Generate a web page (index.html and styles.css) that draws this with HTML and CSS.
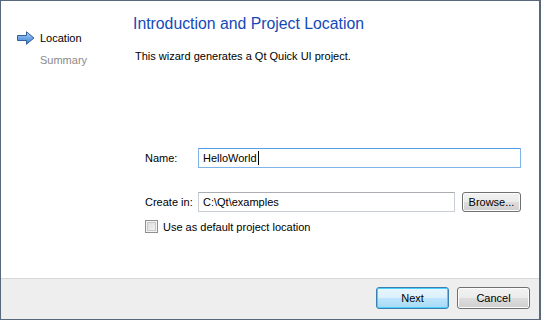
FILE: index.html
```html
<!DOCTYPE html>
<html lang="en">
<head>
    <meta charset="UTF-8">
    <meta name="viewport" content="width=device-width, initial-scale=1.0">
    <title>New Qt Quick UI Project</title>
    <link rel="stylesheet" href="styles.css">
</head>
<body>
    <div class="dialog">
        <div class="main">
            <div class="sidebar">
                <div class="step current">
                    <svg class="step-arrow" width="18" height="14" viewBox="0 0 18 14">
                        <defs>
                            <linearGradient id="arrow-fill" x1="0" y1="0" x2="0" y2="1">
                                <stop offset="0" stop-color="#b9d8f7"/>
                                <stop offset="0.5" stop-color="#6fa6e6"/>
                                <stop offset="1" stop-color="#3d7fd4"/>
                            </linearGradient>
                        </defs>
                        <path d="M0.5 4.5 H9.5 V0.8 L17 7 L9.5 13.2 V9.5 H0.5 Z" fill="url(#arrow-fill)" stroke="#2f5f9e" stroke-width="1" stroke-linejoin="round"/>
                    </svg>
                    <span>Location</span>
                </div>
                <div class="step">
                    <span>Summary</span>
                </div>
            </div>

            <div class="content">
                <h1 class="title">Introduction and Project Location</h1>
                <p class="intro">This wizard generates a Qt Quick UI project.</p>

                <div class="form">
                    <div class="form-row">
                        <label class="form-label">Name:</label>
                        <div class="field focused">HelloWorld<span class="caret"></span></div>
                    </div>
                    <div class="form-row row-path">
                        <label class="form-label">Create in:</label>
                        <div class="field">C:\Qt\examples</div>
                        <button class="btn btn-browse">Browse...</button>
                    </div>
                    <div class="check-row">
                        <span class="checkbox"></span>
                        <span>Use as default project location</span>
                    </div>
                </div>
            </div>
        </div>

        <div class="footer">
            <button class="btn btn-default">Next</button>
            <button class="btn">Cancel</button>
        </div>
    </div>
</body>
</html>
```

FILE: styles.css
```css
* {
    box-sizing: border-box;
}
body {
    margin: 0;
    font-family: 'Liberation Sans', Arial, sans-serif;
    font-size: 11px;
    color: #000000;
    background-color: #ffffff;
}
.dialog {
    width: 541px;
    height: 320px;
    display: flex;
    flex-direction: column;
    border: 1px solid #57687a;
    border-right-width: 2px;
}
.main {
    flex: 1;
    display: flex;
    background-color: #ffffff;
}
.sidebar {
    width: 132px;
    padding-top: 28px;
    padding-left: 16px;
}
.step {
    display: flex;
    align-items: center;
    height: 18px;
    padding-left: 23px;
    margin-bottom: 4px;
    color: #8a8a8a;
}
.step.current {
    padding-left: 0;
    color: #000000;
}
.step-arrow {
    margin-right: 5px;
}
.content {
    flex: 1;
    padding-top: 13px;
    padding-right: 18px;
}
.title {
    margin: 0;
    font-size: 15.8px;
    font-weight: normal;
    line-height: 20px;
    color: #1449b8;
}
.intro {
    margin: 14px 0 0 2px;
    line-height: 16px;
}
.form {
    margin-top: 84px;
    padding-left: 12px;
}
.form-row {
    display: flex;
    align-items: center;
    height: 20px;
}
.form-label {
    width: 53px;
}
.field {
    flex: 1;
    height: 20px;
    display: flex;
    align-items: center;
    padding-left: 4px;
    border: 1px solid #c9ced6;
    border-top-color: #abadb3;
    background-color: #ffffff;
}
.field.focused {
    border-color: #7eb4ea;
    border-top-color: #569de5;
}
.caret {
    display: inline-block;
    width: 1px;
    height: 14px;
    margin-left: 1px;
    background-color: #000000;
}
.row-path {
    margin-top: 24px;
}
.row-path .field {
    flex: none;
    width: 257px;
}
.btn {
    font-family: inherit;
    font-size: 11px;
    color: #000000;
    height: 22px;
    padding: 0;
    border: 1px solid #707070;
    border-radius: 3px;
    background: linear-gradient(#f2f2f2 0%, #ebebeb 50%, #dddddd 51%, #cfcfcf 100%);
    box-shadow: inset 0 0 0 1px #fcfcfc;
}
.btn-browse {
    width: 59px;
    height: 20px;
    margin-left: 7px;
}
.check-row {
    display: flex;
    align-items: center;
    margin-top: 8px;
    height: 13px;
}
.checkbox {
    width: 13px;
    height: 13px;
    margin-right: 5px;
    border: 1px solid #8e8f8f;
    background: linear-gradient(135deg, #d9d9d9, #f6f6f6);
    box-shadow: inset 0 0 0 1px #f4f4f4, inset 0 0 0 2px #c8c8c8;
}
.footer {
    height: 41px;
    display: flex;
    justify-content: flex-end;
    align-items: flex-start;
    gap: 8px;
    padding: 8px 9px 0 0;
    background-color: #eeeeee;
    border-top: 1px solid #d6d6d6;
}
.footer .btn {
    width: 73px;
}
.btn-default {
    border-color: #3c7fb1;
    box-shadow: inset 0 0 0 1px #48d2fb;
    background: linear-gradient(#eaf6fd 0%, #d9f0fc 50%, #bee6fd 51%, #a7d9f5 100%);
}
```
